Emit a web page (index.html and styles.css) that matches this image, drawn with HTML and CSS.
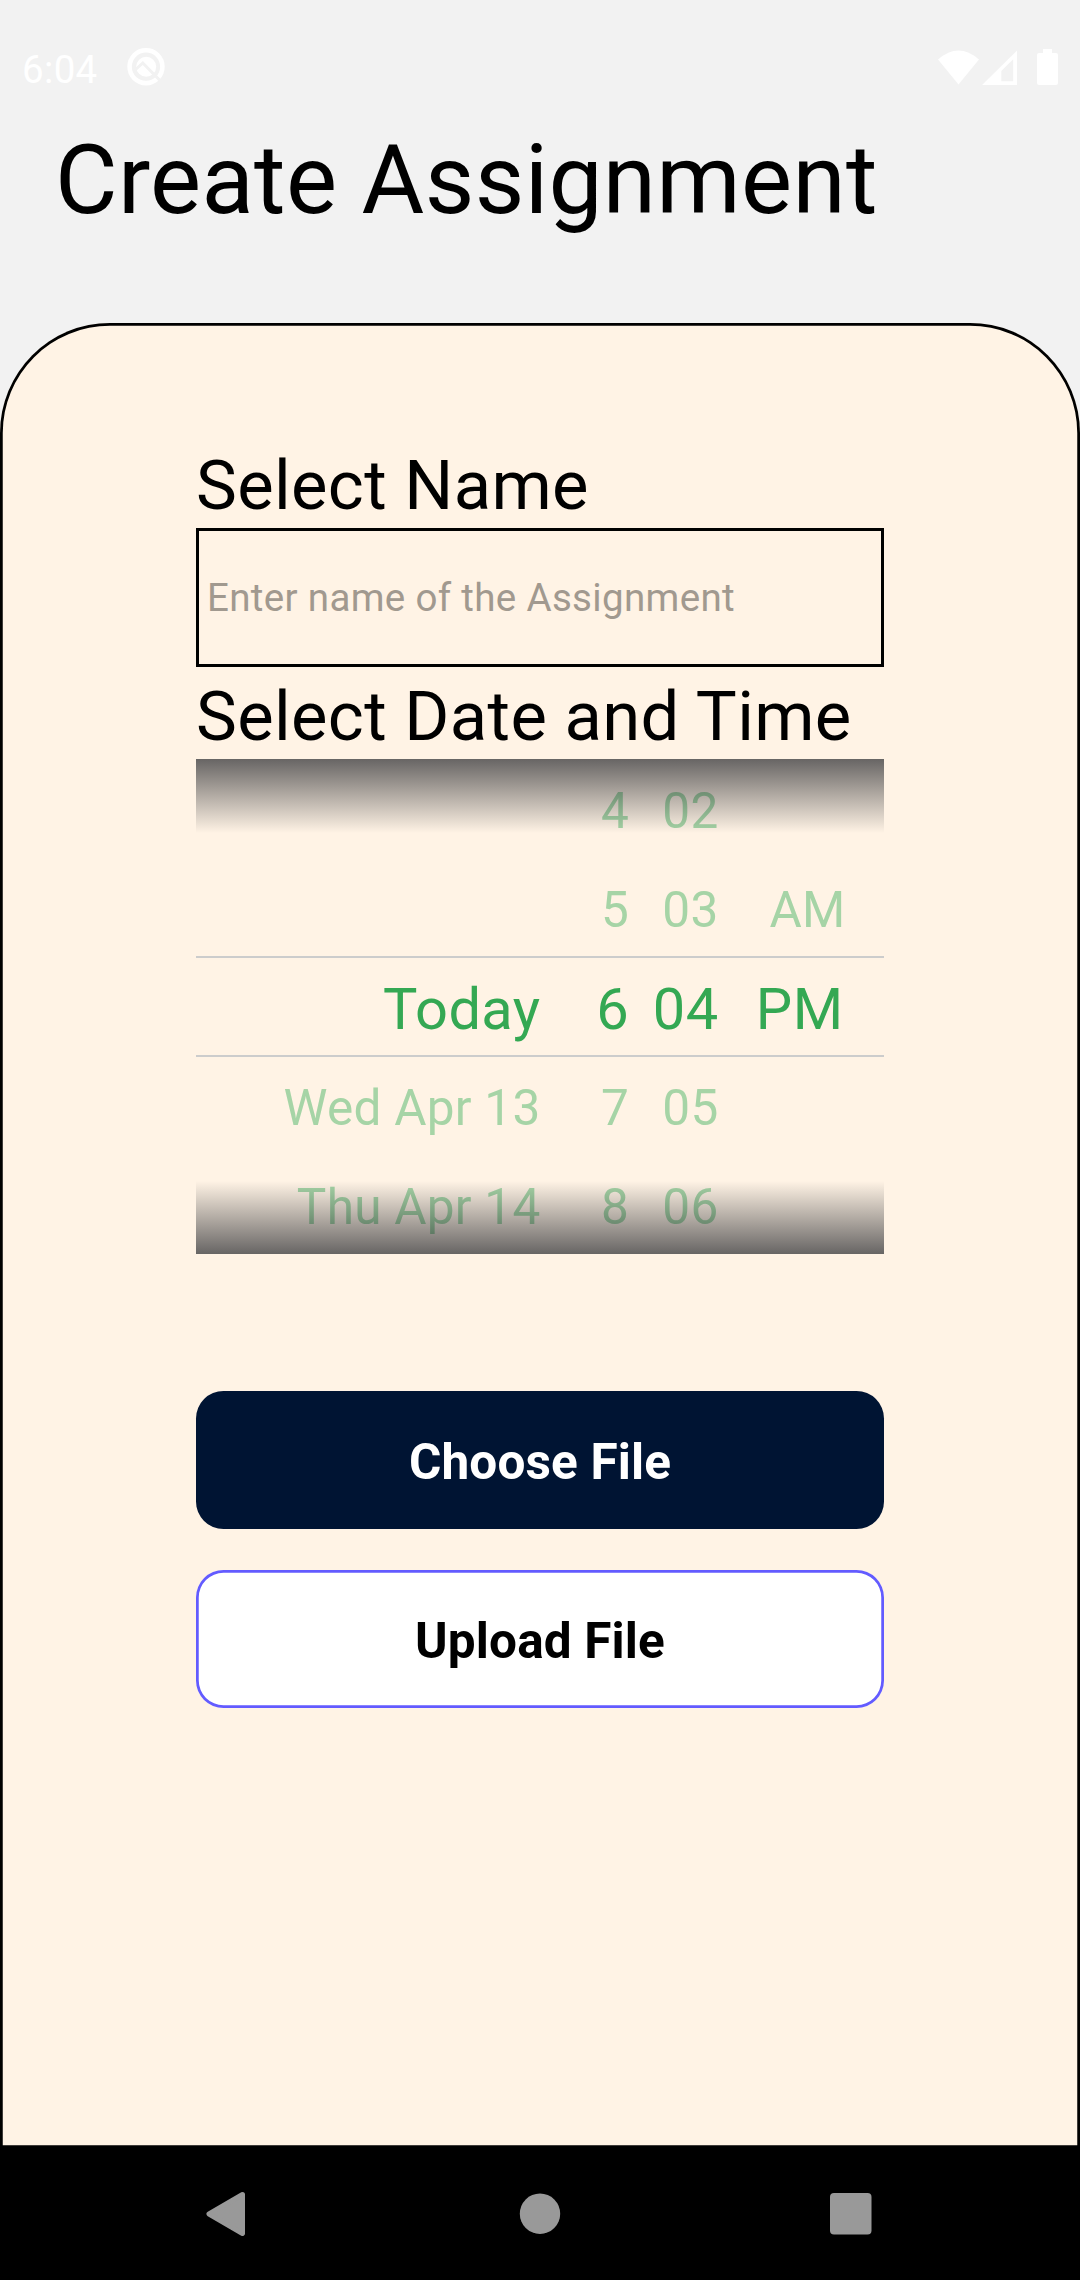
FILE: index.html
```html
<!DOCTYPE html>
<html lang="en">
<head>
<meta charset="utf-8">
<title>Create Assignment</title>
<link rel="stylesheet" href="styles.css">
</head>
<body>
<div class="screen">
  <header class="status">
    <span class="clock">6:04</span>
    <svg class="debug" width="38" height="38" viewBox="0 0 38 38" fill="none">
      <circle cx="19" cy="18.700" r="16.400" stroke="#fff" stroke-width="4.600"/>
      <circle cx="19.200" cy="18.700" r="10" fill="#fff"/>
      <path d="M7.500 22.500L15.800 15 34 33.500" stroke="#f2f2f2" stroke-width="3"/>
    </svg>
    <svg class="signals" width="122" height="38" viewBox="0 0 122 38" fill="#fff">
      <path d="M0 10.500Q20.500-7.500 41 10.500L20.500 35.500Z"/>
      <path fill-rule="evenodd" d="M44 36L79 1.500V36ZM63.300 22V32.200H75.200V10.200Z"/>
      <path d="M105 0H114V4H118Q120 4 120 6V34Q120 36 118 36H101Q99 36 99 34V6Q99 4 101 4H105Z"/>
    </svg>
  </header>
  <h1 class="title">Create Assignment</h1>
  <main class="card">
    <label class="label" for="name">Select Name</label>
    <input class="field" id="name" type="text" placeholder="Enter name of the Assignment">
    <div class="label label-date">Select Date and Time</div>
    <div class="picker">
      <div class="wheel wheel-day"><span></span><span></span><span class="current">Today</span><span>Wed Apr 13</span><span>Thu Apr 14</span></div>
      <div class="wheel wheel-hour"><span>4</span><span>5</span><span class="current">6</span><span>7</span><span>8</span></div>
      <div class="wheel wheel-minute"><span>02</span><span>03</span><span class="current">04</span><span>05</span><span>06</span></div>
      <div class="wheel wheel-period"><span></span><span>AM</span><span class="current">PM</span><span></span><span></span></div>
    </div>
    <button class="button choose" type="button">Choose File</button>
    <button class="button upload" type="button">Upload File</button>
  </main>
  <nav class="nav">
    <svg width="45" height="48" viewBox="0 0 45 48"><path d="M37.500 4.500L4 24 37.500 43.500Z" fill="#999" stroke="#999" stroke-width="5" stroke-linejoin="round"/></svg>
    <svg width="42" height="42" viewBox="0 0 42 42"><circle cx="21" cy="20.700" r="20.200" fill="#999"/></svg>
    <svg width="42" height="42" viewBox="0 0 42 42"><rect width="41.500" height="41.500" rx="4" fill="#999"/></svg>
  </nav>
</div>
</body>
</html>
```
FILE: styles.css
```css
* {
  box-sizing: border-box;
}

body {
  margin: 0;
  background: #f2f2f2;
  font-family: Roboto, sans-serif;
  color: #000;
}

.screen {
  width: 1080px;
  height: 2280px;
  display: flex;
  flex-direction: column;
  overflow: hidden;
  letter-spacing: 0.34px;
}

.status {
  height: 132px;
  padding: 48px 20px 0 22px;
  display: flex;
  align-items: flex-start;
  color: #fff;
}

.clock {
  width: 105px;
  font-size: 38.5px;
  line-height: 44px;
}

.signals {
  margin-left: auto;
  margin-top: 1px;
}

.title {
  height: 191px;
  margin: 0;
  padding-left: 55px;
  font-size: 96.25px;
  font-weight: 400;
  line-height: 96px;
}

/* The lower border runs on beneath the navigation bar. */
.card {
  flex: 1;
  margin-bottom: -2px;
  padding: 121px 196px 0;
  display: flex;
  flex-direction: column;
  background: #fff3e5;
  border-radius: 110px 110px 0 0;
  box-shadow: inset 0 0 0 2.75px #000;
}

.label {
  height: 84px;
  padding-top: 1px;
  font-size: 68.75px;
  line-height: 82px;
}

.label-date {
  height: 92px;
  padding-top: 9px;
}

.field {
  width: 100%;
  height: 139px;
  padding: 0 8px;
  border: 3px solid #000;
  border-radius: 0;
  background: none;
  font: 38.5px Roboto, sans-serif;
  letter-spacing: inherit;
  outline: none;
}

.field::placeholder {
  color: #a1998f;
  opacity: 1;
}

.picker {
  position: relative;
  height: 495px;
  display: flex;
  color: #a6d4a6;
}

/* Shading at both ends and the two rules round the selected row. */
.picker::after {
  content: "";
  position: absolute;
  inset: 0;
  background:
    linear-gradient(#ccc, #ccc) 0 197px / 100% 2px no-repeat,
    linear-gradient(#ccc, #ccc) 0 296px / 100% 2px no-repeat,
    linear-gradient(rgba(2, 6, 14, 0.6), rgba(2, 6, 14, 0)) top / 100% 74px no-repeat,
    linear-gradient(rgba(2, 6, 14, 0), rgba(2, 6, 14, 0.6)) bottom / 100% 73px no-repeat;
}

.wheel {
  display: grid;
  grid-template-rows: repeat(5, 99px);
  font-size: 49.5px;
  line-height: 105px;
  letter-spacing: 0.25px;
  text-align: right;
  white-space: nowrap;
}

.wheel-day {
  width: 344.5px;
}

.wheel-hour {
  width: 88.5px;
}

.wheel-minute {
  width: 89.5px;
}

.wheel-period {
  width: 127px;
}

.current {
  color: #34a853;
  font-size: 57.75px;
  letter-spacing: 0.4px;
}

.wheel-period .current {
  padding-right: 2px;
}

.button {
  height: 138px;
  padding: 3px 0 0;
  border: 0;
  border-radius: 27.5px;
  font: bold 49.5px Roboto, sans-serif;
  letter-spacing: 0.15px;
}

.choose {
  margin-top: 137px;
  background: #001433;
  color: #fff;
}

.upload {
  margin-top: 41px;
  background: #fff;
  color: #000;
  box-shadow: inset 0 0 0 2.75px #635bff;
}

.nav {
  height: 134px;
  padding: 2px 208px 0 205px;
  display: flex;
  align-items: center;
  justify-content: space-between;
  background: #000;
}
```
